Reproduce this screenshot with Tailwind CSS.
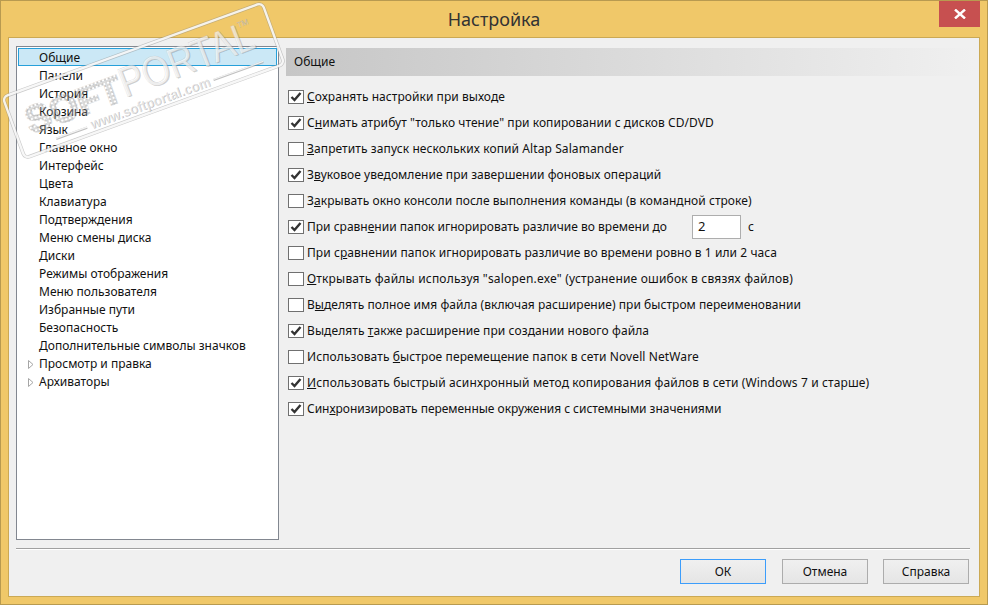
<!doctype html>
<html><head><meta charset="utf-8"><script src="https://cdn.jsdelivr.net/npm/@tailwindcss/browser@4"></script></head>
<body class="m-0">
<div class="relative w-[988px] h-[605px] overflow-hidden flex flex-col bg-[#f0c869] border border-[#b89a50] font-['Noto_Sans',sans-serif] text-[12px] text-[#111]">
  <div class="h-[36px] shrink-0 relative flex items-center justify-center">
    <span class="text-[18px] text-[#333]">Настройка</span>
    <div class="absolute top-0 right-[7px] w-[41px] h-[26px] bg-[#c75050] flex items-center justify-center">
      <svg width="12" height="10" viewBox="0 0 12 10"><path d="M1 0.5 L11 9.5 M11 0.5 L1 9.5" stroke="#fff" stroke-width="2.4"/></svg>
    </div>
  </div>
  <div class="mx-[7px] mb-[7px] flex-1 flex flex-col bg-[#f0f0f0] border border-[#cba954] px-[7px] pt-[8px] min-h-0">
    <div class="flex gap-[7px] h-[494px] shrink-0">
      <div class="w-[263px] shrink-0 bg-white border border-[#828790] p-[1px] leading-[20px]">
        <div class="h-[18px] pl-[20px] pt-[2px] bg-[#cbe8f6] border border-[#26a0da] flex items-center">Общие</div>
        <div class="pl-[21px] h-[18px]">Панели</div>
        <div class="pl-[21px] h-[18px]">История</div>
        <div class="pl-[21px] h-[18px]">Корзина</div>
        <div class="pl-[21px] h-[18px]">Язык</div>
        <div class="pl-[21px] h-[18px]">Главное окно</div>
        <div class="pl-[21px] h-[18px]">Интерфейс</div>
        <div class="pl-[21px] h-[18px]">Цвета</div>
        <div class="pl-[21px] h-[18px]">Клавиатура</div>
        <div class="pl-[21px] h-[18px]">Подтверждения</div>
        <div class="pl-[21px] h-[18px]">Меню смены диска</div>
        <div class="pl-[21px] h-[18px]">Диски</div>
        <div class="pl-[21px] h-[18px]">Режимы отображения</div>
        <div class="pl-[21px] h-[18px]">Меню пользователя</div>
        <div class="pl-[21px] h-[18px]">Избранные пути</div>
        <div class="pl-[21px] h-[18px]">Безопасность</div>
        <div class="pl-[21px] h-[18px]">Дополнительные символы значков</div>
        <div class="pl-[10px] h-[18px] pt-[2px] flex items-center gap-[5px]"><svg width="6" height="9" viewBox="0 0 6 9"><path d="M0.5 0.5 L5 4.5 L0.5 8.5 Z" fill="#fff" stroke="#a6a6a6"/></svg><span>Просмотр и правка</span></div>
        <div class="pl-[10px] h-[18px] pt-[2px] flex items-center gap-[5px]"><svg width="6" height="9" viewBox="0 0 6 9"><path d="M0.5 0.5 L5 4.5 L0.5 8.5 Z" fill="#fff" stroke="#a6a6a6"/></svg><span>Архиваторы</span></div>
      </div>
      <div class="flex-1 min-w-0 pt-[2px]">
        <div class="h-[28px] w-[689px] flex items-center pl-[8px] bg-gradient-to-r from-[#c6c6c6] to-[#f0f0f0]"><span>Общие</span></div>
        <div class="flex flex-col pt-[8px] pl-[2px]">
          <div class="h-[26px] flex items-center gap-[3px]"><span class="w-[16px] h-[14px] bg-white border border-[#707070] flex items-center justify-center"><svg width="12" height="10" viewBox="0 0 12 10"><path d="M1.5 5 L4.5 8 L10.5 1" fill="none" stroke="#333" stroke-width="2.4"/></svg></span><span class="tracking-[0.05px]"><u>С</u>охранять настройки при выходе</span></div>
          <div class="h-[26px] flex items-center gap-[3px]"><span class="w-[16px] h-[14px] bg-white border border-[#707070] flex items-center justify-center"><svg width="12" height="10" viewBox="0 0 12 10"><path d="M1.5 5 L4.5 8 L10.5 1" fill="none" stroke="#333" stroke-width="2.4"/></svg></span><span class="tracking-[0.06px]">С<u>н</u>имать атрибут "только чтение" при копировании с дисков CD/DVD</span></div>
          <div class="h-[26px] flex items-center gap-[3px]"><span class="w-[16px] h-[14px] bg-white border border-[#707070]"></span><span class="tracking-[0.09px]"><u>З</u>апретить запуск нескольких копий Altap Salamander</span></div>
          <div class="h-[26px] flex items-center gap-[3px]"><span class="w-[16px] h-[14px] bg-white border border-[#707070] flex items-center justify-center"><svg width="12" height="10" viewBox="0 0 12 10"><path d="M1.5 5 L4.5 8 L10.5 1" fill="none" stroke="#333" stroke-width="2.4"/></svg></span><span class="tracking-[0.05px]">З<u>в</u>уковое уведомление при завершении фоновых операций</span></div>
          <div class="h-[26px] flex items-center gap-[3px]"><span class="w-[16px] h-[14px] bg-white border border-[#707070]"></span><span class="tracking-[0.05px]">З<u>а</u>крывать окно консоли после выполнения команды (в командной строке)</span></div>
          <div class="h-[26px] flex items-center gap-[3px]"><span class="w-[16px] h-[14px] bg-white border border-[#707070] flex items-center justify-center"><svg width="12" height="10" viewBox="0 0 12 10"><path d="M1.5 5 L4.5 8 L10.5 1" fill="none" stroke="#333" stroke-width="2.4"/></svg></span><span class="w-[382px]">При сравн<u>е</u>нии папок игнорировать различие во времени до</span><span class="w-[49px] h-[24px] bg-white border border-[#adadad] flex items-center pl-[5px] text-[13px]">2</span><span class="ml-[4px]">с</span></div>
          <div class="h-[26px] flex items-center gap-[3px]"><span class="w-[16px] h-[14px] bg-white border border-[#707070]"></span><span class="tracking-[0.06px]">При с<u>р</u>авнении папок игнорировать различие во времени ровно в 1 или 2 часа</span></div>
          <div class="h-[26px] flex items-center gap-[3px]"><span class="w-[16px] h-[14px] bg-white border border-[#707070]"></span><span class="tracking-[0.18px]"><u>О</u>ткрывать файлы используя "salopen.exe" (устранение ошибок в связях файлов)</span></div>
          <div class="h-[26px] flex items-center gap-[3px]"><span class="w-[16px] h-[14px] bg-white border border-[#707070]"></span><span class="tracking-[0.05px]">В<u>ы</u>делять полное имя файла (включая расширение) при быстром переименовании</span></div>
          <div class="h-[26px] flex items-center gap-[3px]"><span class="w-[16px] h-[14px] bg-white border border-[#707070] flex items-center justify-center"><svg width="12" height="10" viewBox="0 0 12 10"><path d="M1.5 5 L4.5 8 L10.5 1" fill="none" stroke="#333" stroke-width="2.4"/></svg></span><span class="tracking-[0.09px]">Выделять <u>т</u>акже расширение при создании нового файла</span></div>
          <div class="h-[26px] flex items-center gap-[3px]"><span class="w-[16px] h-[14px] bg-white border border-[#707070]"></span><span class="tracking-[0.1px]">Использовать <u>б</u>ыстрое перемещение папок в сети Novell NetWare</span></div>
          <div class="h-[26px] flex items-center gap-[3px]"><span class="w-[16px] h-[14px] bg-white border border-[#707070] flex items-center justify-center"><svg width="12" height="10" viewBox="0 0 12 10"><path d="M1.5 5 L4.5 8 L10.5 1" fill="none" stroke="#333" stroke-width="2.4"/></svg></span><span class="tracking-[0.13px]"><u>И</u>спользовать быстрый асинхронный метод копирования файлов в сети (Windows 7 и старше)</span></div>
          <div class="h-[26px] flex items-center gap-[3px]"><span class="w-[16px] h-[14px] bg-white border border-[#707070] flex items-center justify-center"><svg width="12" height="10" viewBox="0 0 12 10"><path d="M1.5 5 L4.5 8 L10.5 1" fill="none" stroke="#333" stroke-width="2.4"/></svg></span><span class="tracking-[-0.03px]">Син<u>х</u>ронизировать переменные окружения с системными значениями</span></div>
        </div>
      </div>
    </div>
    <div class="mt-[8px] mr-[2px] h-[2px] shrink-0 border-t border-b border-t-[#a0a0a0] border-b-white"></div>
    <div class="mt-[9px] flex justify-end pr-[3px]">
      <button class="w-[86px] h-[25px] border border-[#3c9dfb] bg-gradient-to-b from-[#f0f0f0] to-[#e5e5e5] text-[12px]">ОК</button>
      <button class="ml-[16px] w-[86px] h-[25px] border border-[#acacac] bg-gradient-to-b from-[#f0f0f0] to-[#e5e5e5] text-[12px]">Отмена</button>
      <button class="ml-[15px] w-[86px] h-[25px] border border-[#acacac] bg-gradient-to-b from-[#f0f0f0] to-[#e5e5e5] text-[12px]">Справка</button>
    </div>
  </div>
  <svg class="absolute left-[-1px] top-[-1px] pointer-events-none" width="300" height="180" viewBox="0 0 300 180">
    <defs>
      <pattern id="dots" width="4" height="4" patternUnits="userSpaceOnUse"><rect x="0.5" y="0.5" width="3" height="3" fill="#ffffff" fill-opacity="0.2" stroke="#808080" stroke-opacity="0.4" stroke-width="0.7"/></pattern>
    </defs>
    <g transform="translate(143.5 80.5) rotate(-20)">
      <rect x="-138" y="-32.5" width="276" height="65" rx="5" fill="none" stroke="#8a8a8a" stroke-opacity="0.45" stroke-width="3.6"/>
      <rect x="-138" y="-32.5" width="276" height="65" rx="5" fill="none" stroke="#fff" stroke-opacity="0.85" stroke-width="2.4"/>
      <text x="-124" y="12" textLength="100" lengthAdjust="spacingAndGlyphs" font-family="'Liberation Sans',sans-serif" font-weight="700" font-size="38" fill="url(#dots)" stroke="url(#dots)" stroke-width="2">SOFT</text>
      <g transform="rotate(-1 -23 10)">
        <text x="-22" y="11" textLength="141" lengthAdjust="spacingAndGlyphs" font-family="'Liberation Sans',sans-serif" font-size="42" fill="#666" fill-opacity="0.3">PORTAL</text>
        <text x="-23" y="10" textLength="141" lengthAdjust="spacingAndGlyphs" font-family="'Liberation Sans',sans-serif" font-size="42" fill="#fff" fill-opacity="0.65" stroke="#999" stroke-opacity="0.35" stroke-width="0.5">PORTAL</text>
      </g>
      <text x="-64.5" y="28.5" textLength="127" lengthAdjust="spacingAndGlyphs" font-family="'Liberation Sans',sans-serif" font-size="14" font-weight="700" fill="#666" fill-opacity="0.45">www.softportal.com</text>
      <text x="-65" y="28" textLength="127" lengthAdjust="spacingAndGlyphs" font-family="'Liberation Sans',sans-serif" font-size="14" font-weight="700" fill="#fff" fill-opacity="0.6">www.softportal.com</text>
      <text x="107" y="-17" font-family="'Liberation Sans',sans-serif" font-size="8" fill="#fff" fill-opacity="0.55" stroke="#7a7a7a" stroke-opacity="0.6" stroke-width="0.3">TM</text>
      <path d="M66 23.5 H119 M-102 25 H-69" stroke="#8a8a8a" stroke-opacity="0.55" stroke-width="2.2"/>
      <path d="M66 23 H119 M-102 24.5 H-69" stroke="#fff" stroke-opacity="0.8" stroke-width="1.2"/>
    </g>
  </svg>
</div>
</body></html>
